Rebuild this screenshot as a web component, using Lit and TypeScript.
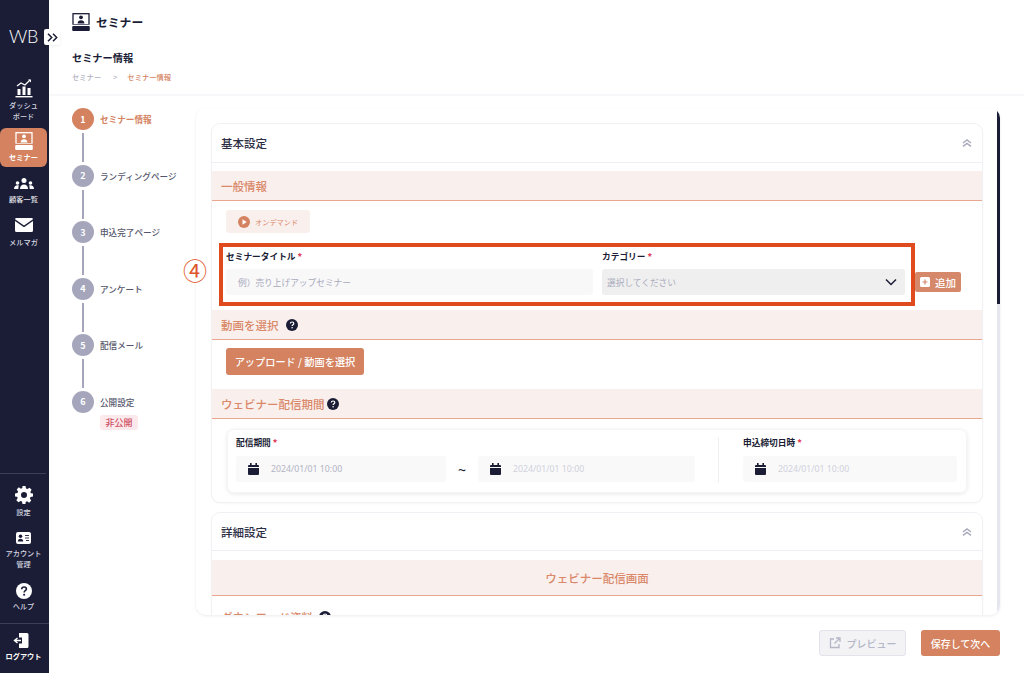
import { LitElement, html, css, svg } from "lit";
import { customElement } from "lit/decorators.js";

const seminarIcon = (fg: string, cut: string) => svg`<svg class="ico-sem" viewBox="0 0 18 18"><rect x="1" y="0.7" width="16" height="11" fill="none" stroke="${fg}" stroke-width="1.3"/><circle cx="9" cy="4.3" r="1.9" fill="${fg}"/><path d="M5.6 10.4c0-2 1.5-3.2 3.4-3.2s3.4 1.2 3.4 3.2z" fill="${fg}"/><rect x="0.2" y="13" width="17.6" height="5" rx="1" fill="${fg}"/><rect x="0" y="11.7" width="18" height="1.3" fill="${cut}"/></svg>`;
const helpIcon = svg`<svg class="q" viewBox="0 0 12 12"><circle cx="6" cy="6" r="6" fill="#1a1d35"/><path d="M4.3 4.6c0-1 .8-1.6 1.8-1.6s1.7.6 1.7 1.5c0 1.3-1.7 1.3-1.7 2.6" fill="none" stroke="#fff" stroke-width="1.2"/><circle cx="6.1" cy="8.8" r=".8" fill="#fff"/></svg>`;
const calIcon = svg`<svg class="cal" viewBox="0 0 11 12"><rect x="2" y="0" width="1.6" height="2.4" fill="#1a1d35"/><rect x="7.4" y="0" width="1.6" height="2.4" fill="#1a1d35"/><path d="M0 2.9a1 1 0 0 1 1-1h9a1 1 0 0 1 1 1v1.2H0zM0 4.9h11V11a1 1 0 0 1-1 1H1a1 1 0 0 1-1-1z" fill="#1a1d35"/></svg>`;
const chevUp = svg`<svg class="chev" viewBox="0 0 10 8"><path d="M1 4l4-3 4 3M1 7.400l4-3 4 3" fill="none" stroke="#a9aabb" stroke-width="1.500"/></svg>`;

const steps = ["セミナー情報", "ランディングページ", "申込完了ページ", "アンケート", "配信メール", "公開設定"];

@customElement("app-root")
export class AppRoot extends LitElement {
  static styles = css`
    :host { display: block; width: 1024px; height: 673px; overflow: hidden; background: #fff;
      font-family: "Noto Sans CJK JP", "Noto Sans", sans-serif; color: #1a1d35; }
    * { box-sizing: border-box; }
    .root { display: flex; height: 673px; position: relative; }

    .side { width: 49px; flex: none; background: #1a1d35; color: #fff; display: flex; flex-direction: column; position: relative; }
    .logo { height: 78px; padding: 24px 0 0 9px; font: 300 18px/24px "Lato", "Noto Sans", sans-serif; letter-spacing: -.3px; }
    .toggle { position: absolute; left: 44px; top: 29px; width: 16px; height: 16px; background: #fff; border-radius: 2px; display: flex; align-items: center; justify-content: center; z-index: 2; box-shadow: 0 1px 3px #0001; }
    .toggle svg { width: 11px; height: 9px; }
    .nav { width: 47px; display: flex; flex-direction: column; align-items: center; text-align: center; font-size: 7.200px; line-height: 10.500px; color: #d5d6e0; font-weight: 500; white-space: nowrap; }
    .nav svg { display: block; flex: none; }
    .dash { height: 50px; }
    .dash svg { width: 18px; height: 20px; margin-bottom: 2px; }
    .active { height: 39px; background: #d4825f; border-radius: 6px; color: #fff; font-weight: 700; padding-top: 4px; }
    .active .ico-sem { width: 18px; height: 18px; margin-bottom: 2px; }
    .cust { height: 40px; padding-top: 11px; color: #e4e4ea; }
    .cust svg { width: 20px; height: 12px; margin-bottom: 4px; }
    .mail { height: 40px; padding-top: 11px; }
    .mail svg { width: 18px; height: 14px; margin-bottom: 5px; }
    .grow { flex: 1; }
    .rule { height: 1px; background: #3b3e58; margin-right: 3px; }
    .rule.full { margin-right: 0; }
    .gear { height: 47px; padding-top: 12px; }
    .gear svg { width: 18px; height: 18px; margin-bottom: 3px; }
    .acct { height: 52px; padding-top: 11px; }
    .acct svg { width: 15px; height: 12px; margin-bottom: 4px; }
    .help { height: 50px; padding-top: 10px; }
    .help svg { width: 16px; height: 16px; margin-bottom: 2px; }
    .logout { height: 49px; padding-top: 9px; color: #fff; font-weight: 700; }
    .logout svg { width: 16px; height: 15px; margin: 0 5px 3px 0; }

    .main { flex: 1; min-width: 0; display: flex; flex-direction: column; }
    .head { height: 96px; flex: none; border-bottom: 2px solid #f8f8fa; padding: 12px 0 0 23px; }
    .title { display: flex; align-items: center; gap: 6px; font-size: 11.800px; font-weight: 700; height: 20px; line-height: 18px; }
    .ico-sem { width: 18px; height: 18px; }
    .sub { margin-top: 16px; font-size: 10.200px; line-height: 20px; font-weight: 700; }
    .crumb { display: flex; font-size: 7.300px; line-height: 12px; margin-top: 3px; color: #b0b1c2; font-weight: 500; }
    .crumb .gt { margin: 0 10px 0 12px; }
    .crumb .cur { color: #d4825f; }

    .body { flex: 1; display: flex; min-height: 0; position: relative; }
    .stepper { width: 147px; flex: none; padding: 12px 0 0 23px; }
    .step { display: flex; flex-direction: column; }
    .step-row { display: flex; align-items: center; gap: 6px; height: 22px; font-size: 8.600px; color: #55566c; font-weight: 500; white-space: nowrap; }
    .num { width: 22px; height: 22px; border-radius: 50%; background: #a5a6bb; color: #fff; font-size: 9px; font-weight: 700; display: flex; align-items: center; justify-content: center; flex: none; }
    .step.on .num { background: #d4825f; }
    .step.on .step-row { color: #d4825f; font-weight: 700; }
    .line { width: 2px; height: 29px; margin: 3px 0 2.500px 10px; background: #a5a6bb; }
    .badge { margin: 2px 0 0 28px; width: 38px; height: 15px; background: #fbe9ec; border-radius: 3px; color: #cf4f63; font-size: 9px; line-height: 15px; text-align: center; font-weight: 500; }

    .marker { position: absolute; left: 134px; top: 159px; font-size: 24px; line-height: 30px; color: #e0562a; font-weight: 400; }

    .panel { width: 804px; height: 507px; margin-top: 12px; border-radius: 10px; padding: 16px 16px 0 16px; overflow: hidden; position: relative; box-shadow: 0 1px 3px #00000014; flex: none; }
    .bar { position: absolute; right: 0; top: 1px; width: 3px; height: 506px; background: #e6e6ef; }
    .bar i { display: block; height: 195px; background: #1a1d35; }
    .card { display: flow-root; width: 770px; border-radius: 8px; box-shadow: 0 0 0 1px #f1f1f5, 0 1px 3px #0000000f; margin-bottom: 11px; background: #fff; }
    .card-h { height: 39px; display: flex; align-items: center; justify-content: space-between; padding: 0 10px 0 9px; border-bottom: 1px solid #eeeef5; font-size: 11.500px; color: #2c2e45; font-weight: 500; }
    .card-h.second { height: 38px; }
    .chev { width: 10px; height: 8px; }
    .band { height: 30px; background: #f9f0ed; border-bottom: 1px solid #e8a78e; display: flex; align-items: center; padding-left: 9px; gap: 7px; font-size: 11.500px; color: #d9886a; font-weight: 500; }
    .q { width: 12px; height: 12px; }
    .first { margin-top: 8px; }
    .tag-row { padding: 9px 0 0 14px; height: 42px; }
    .tag { width: 84px; height: 23px; background: #f9f0ed; border-radius: 3px; display: flex; align-items: center; padding-left: 12px; gap: 5px; font-size: 7.200px; color: #d9886a; }
    .tag svg { width: 12px; height: 12px; }
    .form { display: flex; align-items: flex-start; height: 63px; padding-left: 7px; }
    .hl { width: 696px; height: 63px; border: 4px solid #e04a1f; padding: 3px 6px 0 3px; display: flex; gap: 9px; flex: none; }
    .f1 { width: 367px; }
    .f2 { width: 303px; }
    label { display: block; font-size: 8.700px; line-height: 14px; font-weight: 700; white-space: nowrap; }
    label b { color: #e0405a; margin-left: 2px; }
    .input { height: 26px; margin-top: 5px; border-radius: 3px; background: #f8f8f9; font-size: 8.700px; color: #a9aabb; display: flex; align-items: center; padding-left: 12px; }
    .select { background: #efefef; padding: 0 6px 0 5px; justify-content: space-between; }
    .select svg { width: 12px; height: 8px; margin-right: 2px; }
    .add { width: 46px; height: 20px; margin-top: 29px; background: #d6886a; border-radius: 2px; color: #fff; font-size: 10.500px; font-weight: 500; display: flex; align-items: center; gap: 5px; padding-left: 5px; flex: none; }
    .add svg { width: 10px; height: 10px; }
    .band2 { margin-top: 4px; }
    .band3 { gap: 2px; }
    .up-row { height: 49px; padding: 8px 0 0 14px; }
    .up { width: 138px; height: 27px; background: #d4825f; border-radius: 3px; color: #fff; font-size: 10.200px; font-weight: 500; display: flex; align-items: center; justify-content: center; white-space: nowrap; }
    .inner { margin: 10px 15px 9px 15px; height: 64px; border-radius: 7px; box-shadow: 0 1px 4px #00000018; display: flex; padding: 6px 9px 0 8px; border: 1px solid #f5f5f8; }
    .range { width: 459px; flex: none; }
    .dates { display: flex; align-items: center; }
    .date { height: 26px; background: #f9f9fa; border-radius: 3px; display: flex; align-items: center; padding-left: 12px; gap: 12px; font: 400 8.750px "Noto Sans", sans-serif; color: #b3b4c3; }
    .date.a { width: 210px; }
    .date.b { width: 217px; color: #d0d1da; }
    .date.c { width: 214px; color: #d0d1da; }
    .tilde { width: 32px; text-align: center; font: 400 14px "Noto Sans", sans-serif; }
    .cal { width: 11px; height: 12px; flex: none; }
    .vr { width: 1px; height: 46px; background: #f0f0f4; margin: 1px 24px 0 23px; }
    .lbl2 { line-height: 14px; margin-bottom: 6px; }
    .center { justify-content: center; height: 36px; margin-top: 9px; padding-left: 0; }
    .dl { padding: 12px 0 0 9px; }
    .dlt { display: flex; gap: 6px; align-items: center; font-size: 11.500px; color: #d9886a; font-weight: 500; line-height: 18px; }

    .foot { height: 58px; flex: none; display: flex; justify-content: flex-end; gap: 15px; padding: 15px 24px 0 0; }
    .prev { width: 87px; height: 26px; border: 1px solid #e3e3ec; background: #f3f3f6; border-radius: 3px; color: #b5b6c6; font-size: 10px; font-weight: 500; display: flex; align-items: center; justify-content: center; gap: 6px; }
    .prev svg { width: 12px; height: 12px; }
    .save { width: 79px; height: 26px; background: #d4825f; border-radius: 3px; color: #fff; font-size: 10px; font-weight: 500; display: flex; align-items: center; justify-content: center; }
  `;

  render() {
    return html`<div class="root">
      <aside class="side">
        <div class="logo">WB</div>
        <div class="toggle"><svg viewBox="0 0 11 9"><path d="M1 .8l3.700 3.700L1 8.200M6 .8l3.700 3.700L6 8.200" fill="none" stroke="#1a1d35" stroke-width="1.500"/></svg></div>
        <div class="nav dash">
          <svg viewBox="0 0 18 20"><path d="M2 8l4-3 4 2 5-5" fill="none" stroke="#fff" stroke-width="1.300"/><path d="M13 1.500h3v3z" fill="#fff"/><rect x="2.500" y="11" width="3" height="6" fill="#fff"/><rect x="7.500" y="8.500" width="3" height="8.500" fill="#fff"/><rect x="12.500" y="10" width="3" height="7" fill="#fff"/><rect x="0.500" y="18" width="17" height="1.400" fill="#fff"/></svg>
          ダッシュ<br />ボード
        </div>
        <div class="nav active">${seminarIcon("#fff", "#d4825f")}セミナー</div>
        <div class="nav cust">
          <svg viewBox="0 0 20 12"><circle cx="10" cy="2.500" r="2.500" fill="#fff"/><path d="M6 11c0-3 1.700-4.500 4-4.500s4 1.500 4 4.500z" fill="#fff"/><circle cx="3.500" cy="5" r="1.800" fill="#fff"/><path d="M0 11c0-2.500 1.500-3.800 3.500-3.800 .6 0 1 .1 1.400.3-.4.9-.6 2-.6 3.500z" fill="#fff"/><circle cx="16.500" cy="5" r="1.800" fill="#fff"/><path d="M20 11c0-2.500-1.500-3.800-3.500-3.800-.6 0-1 .1-1.400.3.400.9.600 2 .600 3.500z" fill="#fff"/></svg>
          顧客一覧
        </div>
        <div class="nav mail">
          <svg viewBox="0 0 18 14"><path d="M1.500 0h15A1.500 1.500 0 0 1 18 1.300L9 7.500 0 1.300A1.500 1.500 0 0 1 1.500 0zM0 3l9 6.200L18 3v9.500a1.500 1.500 0 0 1-1.500 1.500h-15A1.500 1.500 0 0 1 0 12.500z" fill="#fff"/></svg>
          メルマガ
        </div>
        <div class="grow"></div>
        <div class="rule"></div>
        <div class="nav gear">
          <svg viewBox="0 0 24 24"><path fill="#fff" fill-rule="evenodd" d="M10 0h4l.7 3.300 1.900.8 2.800-1.800 2.800 2.800-1.800 2.800.8 1.900L24 10v4l-3.300.7-.8 1.900 1.800 2.800-2.800 2.800-2.800-1.800-1.900.8L14 24h-4l-.7-3.300-1.900-.8-2.800 1.800-2.800-2.800 1.800-2.800-.8-1.900L0 14v-4l3.300-.7.8-1.900L2.300 4.600l2.800-2.800 2.800 1.800 1.900-.8zM12 8a4 4 0 1 0 0 8 4 4 0 0 0 0-8z"/></svg>
          設定
        </div>
        <div class="nav acct">
          <svg viewBox="0 0 15 12"><rect width="15" height="12" rx="2" fill="#fff"/><circle cx="4.500" cy="4.300" r="1.800" fill="#1a1d35"/><path d="M1.800 9.500c0-1.800 1.200-2.800 2.700-2.800s2.700 1 2.700 2.800z" fill="#1a1d35"/><path d="M9 3.500h4M9 6h4M10 8.500h3" stroke="#1a1d35" stroke-width=".9"/></svg>
          アカウント<br />管理
        </div>
        <div class="nav help">
          <svg viewBox="0 0 12 12"><circle cx="6" cy="6" r="6" fill="#fff"/><path d="M4.300 4.600c0-1 .8-1.600 1.800-1.600s1.700.6 1.700 1.500c0 1.300-1.700 1.300-1.700 2.600" fill="none" stroke="#1a1d35" stroke-width="1.200"/><circle cx="6.100" cy="8.800" r=".8" fill="#1a1d35"/></svg>
          ヘルプ
        </div>
        <div class="rule full"></div>
        <div class="nav logout">
          <svg viewBox="0 0 16 15"><path d="M6 0h8a1.500 1.500 0 0 1 1.500 1.500v12A1.500 1.500 0 0 1 14 15H6v-4.500h3v-6H6z" fill="#fff"/><path d="M8 7.500H2.500M4.500 5L1.500 7.500 4.500 10" fill="none" stroke="#fff" stroke-width="1.400"/></svg>
          ログアウト
        </div>
      </aside>

      <div class="main">
        <header class="head">
          <div class="title">${seminarIcon("#1a1d35", "#fff")}セミナー</div>
          <div class="sub">セミナー情報</div>
          <div class="crumb"><span>セミナー</span><span class="gt">&gt;</span><span class="cur">セミナー情報</span></div>
        </header>

        <div class="body">
          <nav class="stepper">
            ${steps.map((s, i) => html`<div class="step ${i === 0 ? "on" : ""}">
              <div class="step-row"><span class="num">${i + 1}</span>${s}</div>
              ${i < 5 ? html`<div class="line"></div>` : html`<div class="badge">非公開</div>`}
            </div>`)}
          </nav>
          <div class="marker">④</div>

          <section class="panel">
            <div class="card">
              <div class="card-h">基本設定${chevUp}</div>
              <div class="band first">一般情報</div>
              <div class="tag-row"><div class="tag">
                <svg viewBox="0 0 12 12"><circle cx="6" cy="6" r="6" fill="#d4825f"/><path d="M4.500 3.300L8.700 6 4.500 8.700z" fill="#fff"/></svg>オンデマンド
              </div></div>
              <div class="form">
                <div class="hl">
                  <div class="f1"><label>セミナータイトル<b>*</b></label><div class="input">例）売り上げアップセミナー</div></div>
                  <div class="f2"><label>カテゴリー<b>*</b></label><div class="input select">選択してください
                    <svg viewBox="0 0 12 8"><path d="M1 1.500l5 5 5-5" fill="none" stroke="#1a1d35" stroke-width="1.500"/></svg></div></div>
                </div>
                <div class="add"><svg viewBox="0 0 10 10"><rect width="10" height="10" rx="1.500" fill="#fff"/><path d="M5 2.500v5M2.500 5h5" stroke="#d6886a" stroke-width="1.200"/></svg>追加</div>
              </div>
              <div class="band band2">動画を選択 ${helpIcon}</div>
              <div class="up-row"><div class="up">アップロード / 動画を選択</div></div>
              <div class="band band3">ウェビナー配信期間 ${helpIcon}</div>
              <div class="inner">
                <div class="range">
                  <label class="lbl2">配信期間<b>*</b></label>
                  <div class="dates">
                    <div class="date a">${calIcon}2024/01/01 10:00</div>
                    <div class="tilde">~</div>
                    <div class="date b">${calIcon}2024/01/01 10:00</div>
                  </div>
                </div>
                <div class="vr"></div>
                <div>
                  <label class="lbl2">申込締切日時<b>*</b></label>
                  <div class="dates"><div class="date c">${calIcon}2024/01/01 10:00</div></div>
                </div>
              </div>
            </div>
            <div class="card">
              <div class="card-h second">詳細設定${chevUp}</div>
              <div class="band center">ウェビナー配信画面</div>
              <div class="dl"><div class="dlt">ダウンロード資料 ${helpIcon}</div></div>
            </div>
            <div class="bar"><i></i></div>
          </section>
        </div>

        <footer class="foot">
          <div class="prev"><svg viewBox="0 0 12 12"><path d="M5 2H1.500v8.500H10V7M7 1h4v4M11 1L5.500 6.500" fill="none" stroke="#b5b6c6" stroke-width="1.300"/></svg>プレビュー</div>
          <div class="save">保存して次へ</div>
        </footer>
      </div>
    </div>`;
  }
}
